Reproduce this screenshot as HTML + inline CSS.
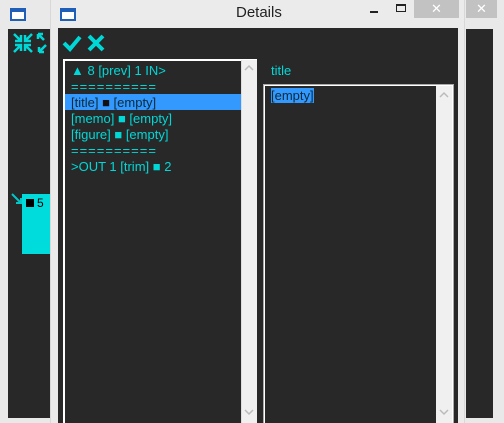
<!DOCTYPE html>
<html><head><style>
*{margin:0;padding:0;box-sizing:border-box}
body{width:504px;height:423px;overflow:hidden;background:#e9e9e9;position:relative;font-family:"Liberation Sans",sans-serif}
.a{position:absolute}
.t{font-size:13px;color:#00d8d8;white-space:nowrap;line-height:16px}
</style></head><body>
<div class="a" style="left:10px;top:8px;width:16px;height:13px;border:2px solid #1f5fb8;border-top-width:4px;background:#fff"></div>
<div class="a" style="left:8px;top:29px;width:42px;height:389px;background:#282828"></div>
<svg class="a" style="left:12px;top:32px" width="40" height="24"><g stroke="#00d8d8" stroke-width="2.5" fill="none"><path d="M2 2l7 7M3 9h6V3M20 2l-7 7M13 3v6h6M2 20l7-7M3 13h6v6M20 20l-7-7M13 19v-6h6"/><path d="M26 2l6 6M26 2h5M26 2v5M27 20l7-7M27 20h5M27 20v-5"/></g></svg>
<div class="a" style="left:22px;top:194px;width:30px;height:60px;background:#00dcdc"></div>
<div class="a" style="left:26px;top:199px;width:8px;height:8px;background:#000"></div>
<div class="a t" style="left:37px;top:195px;color:#000;font-size:12px">5</div>
<svg class="a" style="left:10px;top:192px" width="14" height="14"><path d="M2 2l9 9M6 11h5V6" stroke="#00c8c8" stroke-width="2" fill="none"/></svg>
<div class="a" style="left:466px;top:0;width:31px;height:18px;background:#c2c2c2;color:#fff;text-align:center;font-size:13px;line-height:18px">✕</div>
<div class="a" style="left:466px;top:29px;width:27px;height:389px;background:#282828"></div>
<div class="a" style="left:50px;top:0;width:415px;height:423px;background:#ebebeb;border-left:1px solid #d8d8d8;border-right:1px solid #d8d8d8"></div>
<div class="a" style="left:60px;top:8px;width:16px;height:13px;border:2px solid #1f5fb8;border-top-width:4px;background:#fff"></div>
<div class="a" style="left:236px;top:4px;font-size:15px;color:#222">Details</div>
<div class="a" style="left:370px;top:11px;width:8px;height:2px;background:#222"></div>
<div class="a" style="left:396px;top:4px;width:10px;height:8px;border:1px solid #222;border-top-width:2px"></div>
<div class="a" style="left:414px;top:0;width:45px;height:18px;background:#c2c2c2;color:#fff;text-align:center;font-size:13px;line-height:18px">✕</div>
<div class="a" style="left:58px;top:28px;width:400px;height:395px;background:#282828"></div>
<svg class="a" style="left:62px;top:33px" width="50" height="20"><path d="M2 10l6 6L18 4" stroke="#00d8d8" stroke-width="4" fill="none"/><path d="M27 3l14 14M41 3L27 17" stroke="#00d8d8" stroke-width="4" fill="none"/></svg>
<div class="a" style="left:63px;top:59px;width:194px;height:364px;border:2px solid #fff;border-bottom:0;background:#282828"></div>
<div class="a" style="left:241px;top:60px;width:16px;height:363px;background:#f0f0f0;border-left:1px solid #ddd"></div>
<svg class="a" style="left:244px;top:64px" width="10" height="8"><path d="M1 6l4-4 4 4" stroke="#bbb" stroke-width="1.5" fill="none"/></svg>
<svg class="a" style="left:244px;top:408px" width="10" height="8"><path d="M1 2l4 4 4-4" stroke="#bbb" stroke-width="1.5" fill="none"/></svg>
<div class="a" style="left:65px;top:94px;width:176px;height:16px;background:#3399ff"></div>
<div class="a t" style="left:71px;top:63px">▲ 8 [prev] 1 IN&gt;</div>
<div class="a t" style="left:71px;top:79px;letter-spacing:1px">==========</div>
<div class="a t" style="left:71px;top:95px;color:#0a2a3a">[title] <span style="color:#111">■</span> [empty]</div>
<div class="a t" style="left:71px;top:111px">[memo] ■ [empty]</div>
<div class="a t" style="left:71px;top:127px">[figure] ■ [empty]</div>
<div class="a t" style="left:71px;top:143px;letter-spacing:1px">==========</div>
<div class="a t" style="left:71px;top:159px">&gt;OUT 1 [trim] ■ 2</div>
<div class="a t" style="left:271px;top:63px">title</div>
<div class="a" style="left:263px;top:84px;width:191px;height:339px;border:1px solid #aaa;border-bottom:0"></div>
<div class="a" style="left:264px;top:85px;width:189px;height:338px;border:1px solid #fff;border-bottom:0;background:#282828"></div>
<div class="a" style="left:436px;top:86px;width:16px;height:337px;background:#f0f0f0"></div>
<svg class="a" style="left:439px;top:91px" width="10" height="8"><path d="M1 6l4-4 4 4" stroke="#bbb" stroke-width="1.5" fill="none"/></svg>
<svg class="a" style="left:439px;top:408px" width="10" height="8"><path d="M1 2l4 4 4-4" stroke="#bbb" stroke-width="1.5" fill="none"/></svg>
<div class="a t" style="left:271px;top:88px;background:#3399ff;color:#0a2a3a;line-height:15px">[empty]</div>
</body></html>
